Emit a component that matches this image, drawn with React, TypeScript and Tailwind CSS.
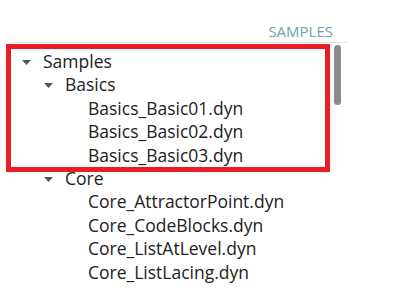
import React from "react";

type Row = { label: string; level: number; folder: boolean };

const rows: Row[] = [
  { label: "Samples", level: 0, folder: true },
  { label: "Basics", level: 1, folder: true },
  { label: "Basics_Basic01.dyn", level: 2, folder: false },
  { label: "Basics_Basic02.dyn", level: 2, folder: false },
  { label: "Basics_Basic03.dyn", level: 2, folder: false },
  { label: "Core", level: 1, folder: true },
  { label: "Core_AttractorPoint.dyn", level: 2, folder: false },
  { label: "Core_CodeBlocks.dyn", level: 2, folder: false },
  { label: "Core_ListAtLevel.dyn", level: 2, folder: false },
  { label: "Core_ListLacing.dyn", level: 2, folder: false },
];

const indent: Record<number, string> = {
  0: "pl-[9px]",
  1: "pl-[31px]",
  2: "pl-[53px]",
};

function Arrow() {
  return (
    <svg width="9" height="5" viewBox="0 0 9 5" className="mt-[1px]">
      <path d="M0 0 L9 0 L4.5 5 Z" fill="#555555" />
    </svg>
  );
}

export default function App() {
  return (
    <div
      className="relative w-[400px] h-[294px] bg-white overflow-hidden"
      style={{ fontFamily: '"Open Sans", "Liberation Sans", sans-serif' }}
    >
      <div className="ml-[13px] w-[334px] pt-[21px] pb-[1px] flex justify-end pr-[14px] text-[15px] leading-[20px] text-[#6fa2a6] border-b border-[#e4e1dd]">
        SAMPLES
      </div>
      <div className="ml-[13px] w-[334px] flex">
        <div className="flex-1 pt-[7px]">
          {rows.map((r) => (
            <div
              key={r.label}
              className={`flex items-center h-[23.4px] ${indent[r.level]} text-[17.5px] leading-[23.4px] text-[#222222] whitespace-nowrap`}
            >
              <div className="w-[22px] shrink-0 flex items-center">
                {r.folder ? <Arrow /> : null}
              </div>
              <span className={r.folder ? "-ml-[1px]" : ""}>{r.label}</span>
            </div>
          ))}
        </div>
        <div className="mt-[2px] mr-[6px] w-[7px] h-[60px] rounded-full bg-[#8a8a8a]" />
      </div>
      <div className="absolute left-[6px] top-[44px] w-[324px] h-[128px] border-[5px] border-[#ec1c24]" />
    </div>
  );
}
